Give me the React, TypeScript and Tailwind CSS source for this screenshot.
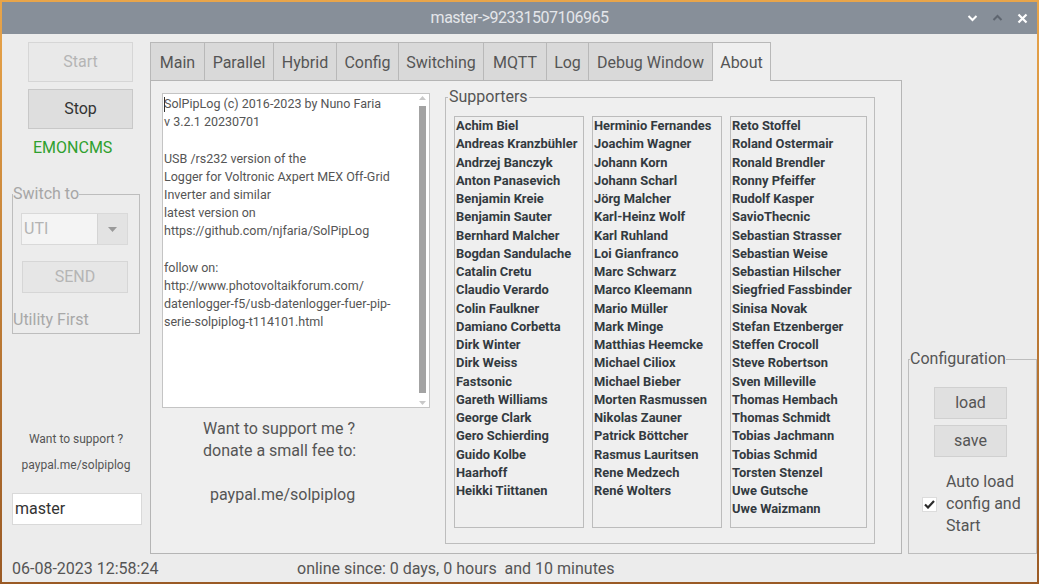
import React from "react";

const col1 = [
  "Achim Biel",
  "Andreas Kranzbühler",
  "Andrzej Banczyk",
  "Anton Panasevich",
  "Benjamin Kreie",
  "Benjamin Sauter",
  "Bernhard Malcher",
  "Bogdan Sandulache",
  "Catalin Cretu",
  "Claudio Verardo",
  "Colin Faulkner",
  "Damiano Corbetta",
  "Dirk Winter",
  "Dirk Weiss",
  "Fastsonic",
  "Gareth Williams",
  "George Clark",
  "Gero Schierding",
  "Guido Kolbe",
  "Haarhoff",
  "Heikki Tiittanen",
];

const col2 = [
  "Herminio Fernandes",
  "Joachim Wagner",
  "Johann Korn",
  "Johann Scharl",
  "Jörg Malcher",
  "Karl-Heinz Wolf",
  "Karl Ruhland",
  "Loi Gianfranco",
  "Marc Schwarz",
  "Marco Kleemann",
  "Mario Müller",
  "Mark Minge",
  "Matthias Heemcke",
  "Michael Ciliox",
  "Michael Bieber",
  "Morten Rasmussen",
  "Nikolas Zauner",
  "Patrick Böttcher",
  "Rasmus Lauritsen",
  "Rene Medzech",
  "René Wolters",
];

const col3 = [
  "Reto Stoffel",
  "Roland Ostermair",
  "Ronald Brendler",
  "Ronny Pfeiffer",
  "Rudolf Kasper",
  "SavioThecnic",
  "Sebastian Strasser",
  "Sebastian Weise",
  "Sebastian Hilscher",
  "Siegfried Fassbinder",
  "Sinisa Novak",
  "Stefan Etzenberger",
  "Steffen Crocoll",
  "Steve Robertson",
  "Sven Milleville",
  "Thomas Hembach",
  "Thomas Schmidt",
  "Tobias Jachmann",
  "Tobias Schmid",
  "Torsten Stenzel",
  "Uwe Gutsche",
  "Uwe Waizmann",
];

const tabs = [
  { name: "Main", w: "w-[54px]" },
  { name: "Parallel", w: "w-[69px]" },
  { name: "Hybrid", w: "w-[63px]" },
  { name: "Config", w: "w-[62px]" },
  { name: "Switching", w: "w-[85px]" },
  { name: "MQTT", w: "w-[63px]" },
  { name: "Log", w: "w-[42px]" },
  { name: "Debug Window", w: "w-[124px]" },
];

const aboutLines = [
  "SolPipLog (c) 2016-2023 by Nuno Faria",
  "v 3.2.1 20230701",
  "",
  "USB /rs232 version of the",
  "Logger for Voltronic Axpert MEX Off-Grid",
  "Inverter and similar",
  "latest version on",
  "https://github.com/njfaria/SolPipLog",
  "",
  "follow on:",
  "http://www.photovoltaikforum.com/",
  "datenlogger-f5/usb-datenlogger-fuer-pip-",
  "serie-solpiplog-t114101.html",
];

function TitleBar() {
  return (
    <div className="relative flex h-[32px] items-center justify-center bg-[#878f99]">
      <span className="text-[16px] tracking-[-0.5px] text-[#e4e6ea]">master-&gt;92331507106965</span>
      <div className="absolute right-[9px] top-0 flex h-full items-center gap-[14px]">
        <svg width="11" height="8" viewBox="0 0 11 8">
          <path d="M1.5 2 L5.5 6 L9.5 2" stroke="#ffffff" strokeWidth="2" fill="none" />
        </svg>
        <svg width="11" height="8" viewBox="0 0 11 8">
          <path d="M1.5 6 L5.5 2 L9.5 6" stroke="#5f6670" strokeWidth="2" fill="none" />
        </svg>
        <svg width="11" height="11" viewBox="0 0 11 11">
          <path d="M1.5 1.5 L9.5 9.5 M9.5 1.5 L1.5 9.5" stroke="#ffffff" strokeWidth="2.2" fill="none" />
        </svg>
      </div>
    </div>
  );
}

function LeftColumn() {
  return (
    <div className="flex w-[148px] flex-col pt-[8px]">
      <button className="ml-[26px] h-[40px] w-[105px] border border-[#d6d6d6] bg-[#e9e9e9] text-[16px] text-[#b5b5b5]">
        Start
      </button>
      <button className="ml-[26px] mt-[7px] h-[40px] w-[105px] border border-[#c8c8c8] bg-[#dedede] text-[16px] text-[#333333]">
        Stop
      </button>
      <div className="ml-[31px] mt-[9px] text-[16px] leading-[20px] text-[#2fa02f]">EMONCMS</div>
      <fieldset className="ml-[10px] mt-[26px] h-[150px] w-[128px] border border-[#bdbdbd]">
        <legend className="text-[16px] leading-[20px] text-[#a6a6a6]">Switch to</legend>
        <div className="ml-[8px] mt-[9px] flex h-[32px] w-[107px] border border-[#d9d9d9]">
          <div className="flex flex-1 items-center bg-[#f4f4f4] pl-[2px] text-[16px] text-[#b3b3b3]">UTI</div>
          <div className="flex w-[30px] items-center justify-center border-l border-[#d4d4d4] bg-[#e3e3e3]">
            <svg width="9" height="5" viewBox="0 0 9 5">
              <path d="M0 0 L9 0 L4.5 5 Z" fill="#9a9a9a" />
            </svg>
          </div>
        </div>
        <button className="ml-[9px] mt-[16px] h-[32px] w-[106px] border border-[#d6d6d6] bg-[#e6e6e6] text-[16px] text-[#b5b5b5]">
          SEND
        </button>
        <div className="mt-[17px] text-[16px] leading-[20px] text-[#a8a8a8]">Utility First</div>
      </fieldset>
      <div className="mt-[97px] text-center text-[12px] leading-[16px] text-[#555555]">Want to support ?</div>
      <div className="mt-[10px] text-center text-[12px] leading-[16px] text-[#555555]">paypal.me/solpiplog</div>
      <div className="ml-[10px] mt-[20px] flex h-[32px] w-[130px] items-center border border-[#d9d9d9] bg-white pl-[2px] text-[16px] text-[#333333]">
        master
      </div>
    </div>
  );
}

function NameList({ names, w }: { names: string[]; w: string }) {
  return (
    <div className={`${w} h-[412px] border border-[#bcbcbc] pl-[1px] text-[12.9px] font-bold leading-[18.25px] text-[#333a40]`}>
      {names.map((n) => (
        <div key={n} className="whitespace-nowrap">
          {n}
        </div>
      ))}
    </div>
  );
}

function AboutPanel() {
  return (
    <div className="flex flex-1 border border-[#b5b5b5] bg-[#efefef] pl-[11px] pt-[6px]">
      <div className="flex w-[268px] flex-col pt-[6px]">
        <div className="flex h-[315px] border border-[#c4c4c4] bg-white">
          <div className="relative flex-1 pl-[1px] pt-[1px] text-[12.5px] leading-[18.2px] text-[#555555]">
            <div className="absolute left-[1px] top-[3px] h-[15px] w-[1px] bg-[#333333]" />
            {aboutLines.map((l, i) => (
              <div key={i} className="h-[18.2px] whitespace-nowrap">
                {l}
              </div>
            ))}
          </div>
          <div className="mr-[1px] flex w-[12px] flex-col items-center py-[2px]">
            <svg width="7" height="4" viewBox="0 0 7 4">
              <path d="M0 4 L7 4 L3.5 0 Z" fill="#c8c8c8" />
            </svg>
            <div className="mt-[6px] w-[7px] flex-1 bg-[#a3a3a3]" />
            <svg className="mt-[8px]" width="7" height="4" viewBox="0 0 7 4">
              <path d="M0 0 L7 0 L3.5 4 Z" fill="#c8c8c8" />
            </svg>
          </div>
        </div>
        <div className="mt-[10px] pl-[41px] text-[16px] leading-[22px] text-[#555555]">
          <div>Want to support me ?</div>
          <div>donate a small fee to:</div>
          <div className="h-[22px]" />
          <div className="pl-[7px]">paypal.me/solpiplog</div>
        </div>
      </div>
      <fieldset className="ml-[15px] mt-[1px] h-[456px] w-[430px] border border-[#bdbdbd]">
        <legend className="ml-[2px] px-[1px] text-[16px] leading-[18px] text-[#555555]">Supporters</legend>
        <div className="ml-[8px] mt-[10px] flex gap-[8px]">
          <NameList names={col1} w="w-[130px]" />
          <NameList names={col2} w="w-[130px]" />
          <NameList names={col3} w="w-[137px]" />
        </div>
      </fieldset>
    </div>
  );
}

function TabWidget() {
  return (
    <div className="flex w-[752px] flex-col pt-[8px]">
      <div className="flex h-[38px]">
        {tabs.map((t) => (
          <div
            key={t.name}
            className={`${t.w} flex items-center justify-center border-l border-t border-[#b8b8b8] bg-[#d9d9d9] pt-[2px] text-[16px] text-[#555555]`}
          >
            {t.name}
          </div>
        ))}
        <div className="relative z-10 -mb-[1px] flex h-[39px] w-[59px] items-center justify-center border-l border-r border-t border-[#b8b8b8] bg-[#efefef] pt-[2px] text-[16px] text-[#555555]">
          About
        </div>
      </div>
      <AboutPanel />
    </div>
  );
}

function RightColumn() {
  return (
    <div className="flex flex-1 flex-col justify-end pl-[6px]">
      <fieldset className="h-[204px] w-[129px] border border-[#bdbdbd]">
        <legend className="ml-[1px] text-[16px] leading-[18px] text-[#555555]">Configuration</legend>
        <button className="ml-[25px] mt-[19px] h-[32px] w-[73px] border border-[#d0d0d0] bg-[#e0e0e0] text-[16px] text-[#555555]">
          load
        </button>
        <button className="ml-[25px] mt-[6px] block h-[32px] w-[73px] border border-[#d0d0d0] bg-[#e0e0e0] text-[16px] text-[#555555]">
          save
        </button>
        <div className="mt-[14px] flex items-center">
          <div className="ml-[13px] flex h-[15px] w-[15px] items-center justify-center border border-[#dcdcdc] bg-white">
            <svg width="11" height="9" viewBox="0 0 11 9">
              <path d="M1 4.5 L4 7.5 L10 1" stroke="#2b2b2b" strokeWidth="2.2" fill="none" />
            </svg>
          </div>
          <div className="ml-[9px] text-[16px] leading-[22px] text-[#555555]">
            <div>Auto load</div>
            <div>config and</div>
            <div>Start</div>
          </div>
        </div>
      </fieldset>
    </div>
  );
}

export default function App() {
  return (
    <div className="h-[584px] w-[1039px] bg-gradient-to-b from-[#e9a54a] to-[#9a5a25] pb-[2px] pl-[2px] pr-[2px] pt-[2px] font-['Roboto',sans-serif]">
      <div className="flex h-full flex-col bg-[#ececec]">
        <TitleBar />
        <div className="flex h-[520px]">
          <LeftColumn />
          <TabWidget />
          <RightColumn />
        </div>
        <div className="flex h-[28px] items-center pt-[2px] text-[16px] text-[#555555]">
          <span className="ml-[10px] w-[285px]">06-08-2023 12:58:24</span>
          <span>online since: 0 days, 0 hours&nbsp; and 10 minutes</span>
        </div>
      </div>
    </div>
  );
}
